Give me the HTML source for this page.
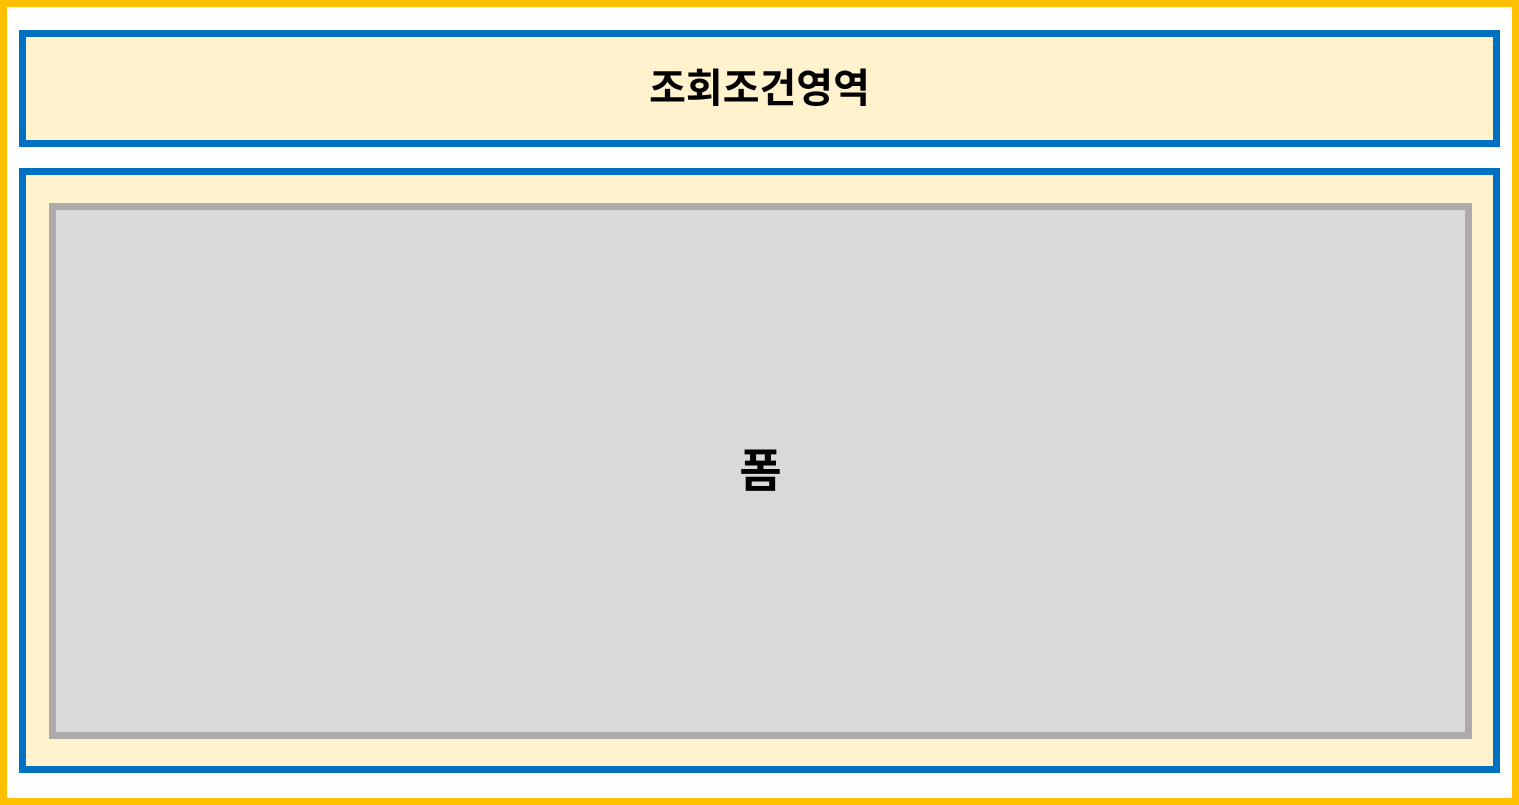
<!DOCTYPE html>
<html><head><meta charset="utf-8"><style>
*{margin:0;padding:0;box-sizing:border-box}
body{width:1519px;height:805px;background:#fff;position:relative;overflow:hidden;font-family:"Liberation Sans","Noto Sans CJK KR",sans-serif;font-weight:bold;color:#000}
.y{position:absolute;left:0;top:0;width:1519px;height:805px;border:7px solid #ffc000}
.b{position:absolute;border:7px solid #0070c0;background:#fff2cc}
.g{position:absolute;border:7px solid #aeaaaa;background:#d9d9d9}
.t{position:absolute;width:100%;text-align:center;line-height:1}
</style></head><body>
<div class="y"></div>
<div class="b" style="left:19px;top:30px;width:1481px;height:117px"><div class="t" style="top:32px;font-size:40px">조회조건영역</div></div>
<div class="b" style="left:19px;top:168px;width:1481px;height:605px"></div>
<div class="g" style="left:49px;top:203px;width:1423px;height:536px"><div class="t" style="top:238px;font-size:46px">폼</div></div>
</body></html>
